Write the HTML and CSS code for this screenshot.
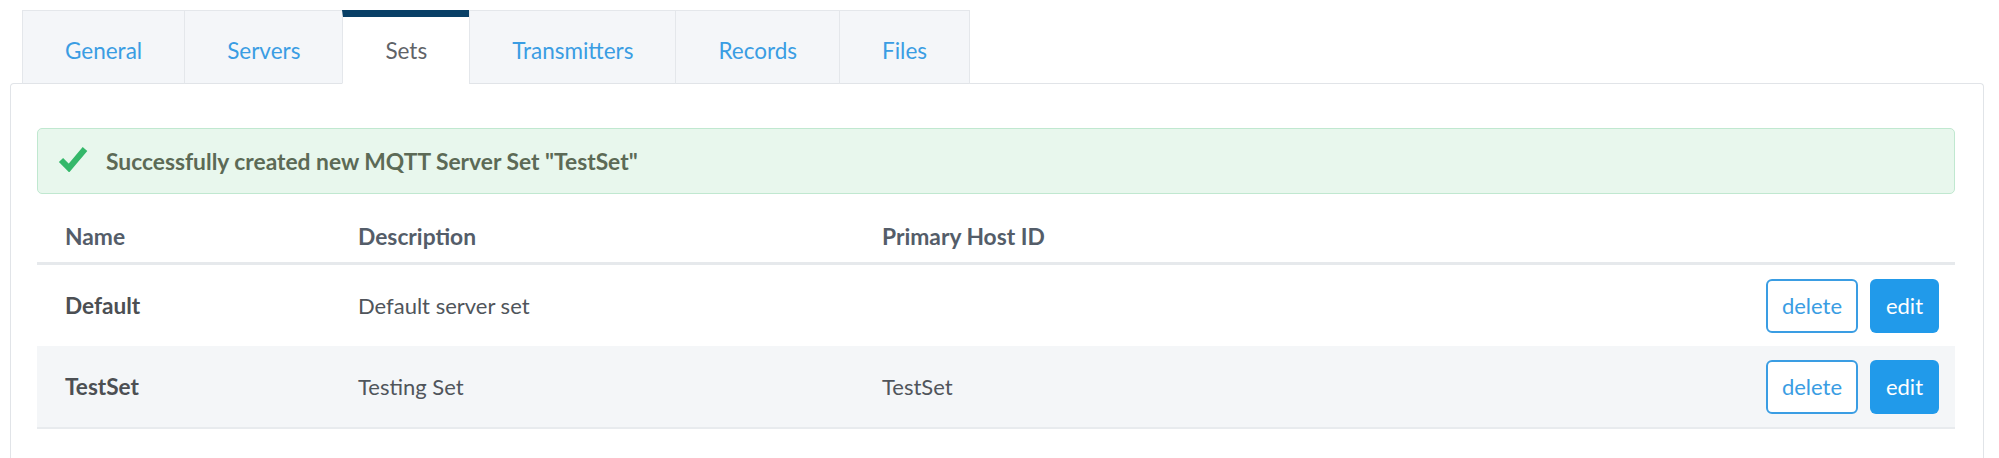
FILE: index.html
```html
<!DOCTYPE html>
<html>
<head>
<meta charset="utf-8">
<link rel="stylesheet" href="styles.css">
</head>
<body>
<div class="page">
  <ul class="tabs">
    <li class="tab"><a>General</a></li>
    <li class="tab"><a>Servers</a></li>
    <li class="tab active"><a>Sets</a></li>
    <li class="tab"><a>Transmitters</a></li>
    <li class="tab"><a>Records</a></li>
    <li class="tab"><a>Files</a></li>
  </ul>
  <div class="panel">
    <div class="alert">
      <svg class="check" viewBox="0 0 30 26" width="30" height="26"><polyline points="3,14 11,22 27,3" fill="none" stroke="#34b86a" stroke-width="6"/></svg>
      <span>Successfully created new MQTT Server Set "TestSet"</span>
    </div>
    <div class="table">
      <div class="row head">
        <div class="cell">Name</div>
        <div class="cell">Description</div>
        <div class="cell">Primary Host ID</div>
        <div class="cell"></div>
      </div>
      <div class="row">
        <div class="cell name">Default</div>
        <div class="cell">Default server set</div>
        <div class="cell"></div>
        <div class="cell actions"><button class="btn outline">delete</button><button class="btn solid">edit</button></div>
      </div>
      <div class="row alt">
        <div class="cell name">TestSet</div>
        <div class="cell">Testing Set</div>
        <div class="cell">TestSet</div>
        <div class="cell actions"><button class="btn outline">delete</button><button class="btn solid">edit</button></div>
      </div>
    </div>
  </div>
</div>
</body>
</html>
```
FILE: styles.css
```css
html, body {
  margin: 0;
  padding: 0;
  background: #ffffff;
}
body {
  font-family: Lato, "Source Sans Pro", "Noto Sans", sans-serif;
  font-size: 22px;
  color: #50555b;
}
.page {
  padding: 10px 15px 0 10px;
}
.tabs {
  list-style: none;
  margin: 0 0 0 12px;
  padding: 0;
  display: flex;
  position: relative;
  z-index: 1;
  margin-bottom: -1px;
}
.tab {
  box-sizing: border-box;
  height: 74px;
  padding: 0 42px;
  display: flex;
  align-items: center;
  padding-top: 6px;
  background: #f4f6f9;
  border: 1px solid #e4e7eb;
  border-bottom: 1px solid #e1e4e8;
  margin-right: -1px;
}
.tab a {
  color: #3a9de3;
  font-size: 22.5px;
}
.tab.active {
  background: #ffffff;
  border-top: 7px solid #083f66;
  border-bottom-color: #ffffff;
  padding-top: 0;
}
.tab.active a {
  color: #5f6368;
}
.panel {
  box-sizing: border-box;
  height: 375px;
  border: 1px solid #e1e4e8;
  border-bottom: 0;
  border-radius: 4px 4px 0 0;
  padding: 44px 28px 0 26px;
}
.alert {
  display: flex;
  align-items: center;
  box-sizing: border-box;
  height: 66px;
  padding: 0 0 0 20px;
  background: #e8f7ed;
  border: 1.5px solid #c0e8d0;
  border-radius: 5px;
  margin-bottom: 16px;
  color: #5c6a56;
  font-weight: 700;
  font-size: 22.8px;
}
.check {
  margin-right: 18px;
  margin-top: -4px;
}
.table {
  display: flex;
  flex-direction: column;
}
.row {
  display: grid;
  grid-template-columns: 293px 524px 1fr auto;
  align-items: center;
  height: 81px;
}
.row.head {
  height: 52px;
  border-bottom: 3px solid #e6e9ec;
  font-weight: 700;
  font-size: 22.8px;
  color: #545d69;
}
.row.alt {
  background: #f4f6f8;
  border-bottom: 2px solid #e8ebee;
}
.cell {
  padding-left: 28px;
}
.cell.name {
  font-weight: 700;
  font-size: 22.6px;
  color: #4c4f53;
}
.cell.actions {
  display: flex;
  gap: 12px;
  padding-right: 16px;
}
.btn {
  box-sizing: border-box;
  height: 54px;
  border-radius: 6px;
  font-family: inherit;
  font-size: 22px;
  padding: 0;
  cursor: pointer;
}
.btn.outline {
  width: 92px;
  background: #ffffff;
  color: #3a9de3;
  border: 2px solid #3a9de3;
}
.btn.solid {
  width: 69px;
  background: #219aea;
  color: #ffffff;
  border: none;
}
```
